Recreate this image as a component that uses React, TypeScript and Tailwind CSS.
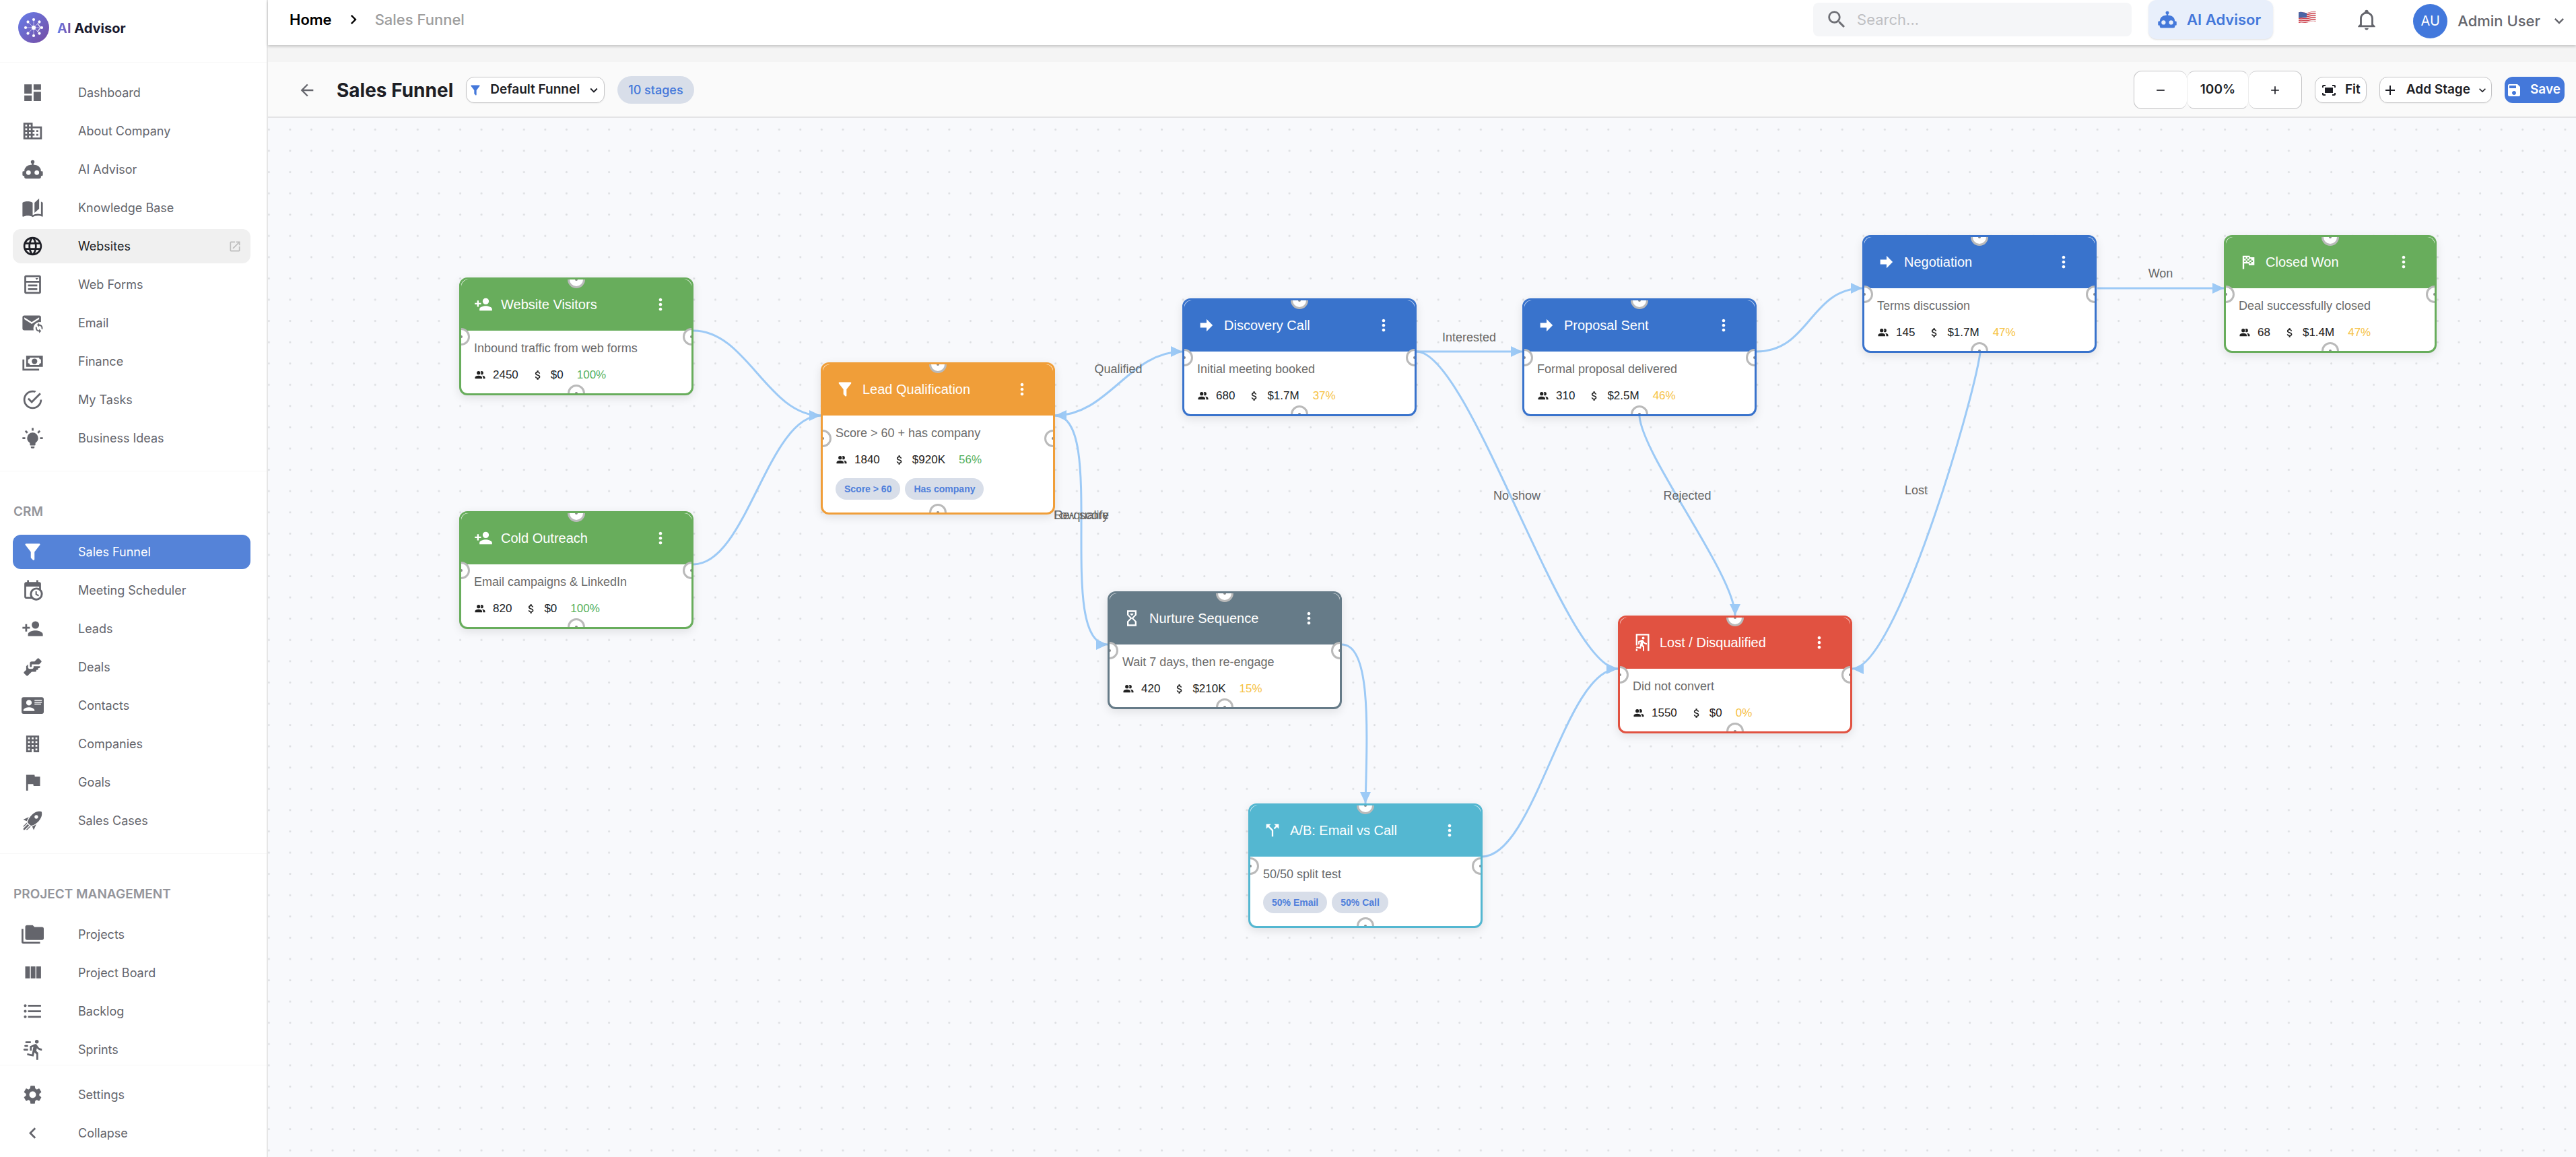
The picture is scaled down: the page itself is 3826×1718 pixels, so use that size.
import {MdArrowBack, MdAttachMoney, MdCallSplit, MdFormatListBulleted, MdLanguage, MdMoreVert, MdOpenInNew, MdSave, MdSearch, MdSettings} from 'react-icons/md'
import type {ComponentType} from 'react'

type IconType = ComponentType<{className?: string}>

const glyph = (d: string): IconType =>
  function Glyph({className}) {
    return (
      <svg viewBox="0 0 24 24" fill="currentColor" className={className} aria-hidden="true">
        <path d={d} />
      </svg>
    )
  }

const Dashboard = glyph('M13 3V9H21V3M13 21H21V11H13M3 21H11V15H3M3 13H11V3H3V13Z')
const Domain = glyph(
  'M18 15H16V17H18M18 11H16V13H18M20 19H12V17H14V15H12V13H14V11H12V9H20M10 7H8V5H10M10 11H8V9H10M10 15H8V13H10M10 19H8V17H10M6 7H4V5H6M6 11H4V9H6M6 15H4V13H6M6 19H4V17H6M12 7V3H2V21H22V7H12Z'
)
const Robot = glyph(
  'M12,2A2,2 0 0,1 14,4C14,4.74 13.6,5.39 13,5.73V7H14A7,7 0 0,1 21,14H22A1,1 0 0,1 23,15V18A1,1 0 0,1 22,19H21V20A2,2 0 0,1 19,22H5A2,2 0 0,1 3,20V19H2A1,1 0 0,1 1,18V15A1,1 0 0,1 2,14H3A7,7 0 0,1 10,7H11V5.73C10.4,5.39 10,4.74 10,4A2,2 0 0,1 12,2M7.5,13A2.5,2.5 0 0,0 5,15.5A2.5,2.5 0 0,0 7.5,18A2.5,2.5 0 0,0 10,15.5A2.5,2.5 0 0,0 7.5,13M16.5,13A2.5,2.5 0 0,0 14,15.5A2.5,2.5 0 0,0 16.5,18A2.5,2.5 0 0,0 19,15.5A2.5,2.5 0 0,0 16.5,13Z'
)
const Book = glyph(
  'M19 2L14 6.5V17.5L19 13V2M6.5 5C4.55 5 2.45 5.4 1 6.5V21.16C1 21.41 1.25 21.66 1.5 21.66C1.6 21.66 1.65 21.59 1.75 21.59C3.1 20.94 5.05 20.5 6.5 20.5C8.45 20.5 10.55 20.9 12 22C13.35 21.15 15.8 20.5 17.5 20.5C19.15 20.5 20.85 20.81 22.25 21.56C22.35 21.61 22.4 21.59 22.5 21.59C22.75 21.59 23 21.34 23 21.09V6.5C22.4 6.05 21.75 5.75 21 5.5V19C19.9 18.65 18.7 18.5 17.5 18.5C15.8 18.5 13.35 19.15 12 20V6.5C10.55 5.4 8.45 5 6.5 5Z'
)
const Form = glyph(
  'M5,2H19A2,2 0 0,1 21,4V20A2,2 0 0,1 19,22H5A2,2 0 0,1 3,20V4A2,2 0 0,1 5,2M5,4V8H19V4H5M5,10V20H19V10H5M15,5H18L16.5,7L15,5M7,12H17V14H7V12M7,16H17V18H7V16Z'
)
const EmailSync = glyph(
  'M3,4H19A2,2 0 0,1 21,6V11.1A7,7 0 0,0 13.1,20H3A2,2 0 0,1 1,18V6A2,2 0 0,1 3,4M11,13L19,8V6L11,11L3,6V8L11,13M19,12V13.5A4,4 0 0,1 22.5,19.2L21.4,18.1A2.5,2.5 0 0,0 19,15V16.5L16.7,14.2L19,12M19,23V21.5A4,4 0 0,1 15.5,15.8L16.6,16.9A2.5,2.5 0 0,0 19,20V18.5L21.3,20.8L19,23Z'
)
const Cash = glyph(
  'M5,6H23V18H5V6M14,9A3,3 0 0,1 17,12A3,3 0 0,1 14,15A3,3 0 0,1 11,12A3,3 0 0,1 14,9M9,8A2,2 0 0,1 7,10V14A2,2 0 0,1 9,16H19A2,2 0 0,1 21,14V10A2,2 0 0,1 19,8H9M1,10H3V20H19V22H1V10Z'
)
const CheckCircle = glyph(
  'M20,12A8,8 0 0,1 12,20A8,8 0 0,1 4,12A8,8 0 0,1 12,4C12.76,4 13.5,4.11 14.2,4.31L15.77,2.74C14.61,2.26 13.34,2 12,2A10,10 0 0,0 2,12A10,10 0 0,0 12,22A10,10 0 0,0 22,12M7.91,10.08L6.5,11.5L11,16L21,6L19.59,4.58L11,13.17L7.91,10.08Z'
)
const Bulb = glyph(
  'M12,6A6,6 0 0,1 18,12C18,14.22 16.79,16.16 15,17.2V19A1,1 0 0,1 14,20H10A1,1 0 0,1 9,19V17.2C7.21,16.16 6,14.22 6,12A6,6 0 0,1 12,6M14,21V22A1,1 0 0,1 13,23H11A1,1 0 0,1 10,22V21H14M20,11H23V13H20V11M1,11H4V13H1V11M13,1V4H11V1H13M4.92,3.5L7.05,5.64L5.63,7.05L3.5,4.93L4.92,3.5M16.95,5.63L19.07,3.5L20.5,4.93L18.37,7.05L16.95,5.63Z'
)
const Filter = glyph(
  'M14,12V19.88C14.04,20.18 13.94,20.5 13.71,20.71C13.32,21.1 12.69,21.1 12.3,20.71L10.29,18.7C10.06,18.47 9.96,18.16 10,17.87V12H9.97L4.21,4.62C3.87,4.19 3.95,3.56 4.38,3.22C4.57,3.08 4.78,3 5,3V3H19V3C19.22,3 19.43,3.08 19.62,3.22C20.05,3.56 20.13,4.19 19.79,4.62L14.03,12H14Z'
)
const CalendarClock = glyph(
  'M15,13H16.5V15.82L18.94,17.23L18.19,18.53L15,16.69V13M19,8H5V19H9.67C9.24,18.09 9,17.07 9,16A7,7 0 0,1 16,9C17.07,9 18.09,9.24 19,9.67V8M5,21C3.89,21 3,20.1 3,19V5C3,3.89 3.89,3 5,3H6V1H8V3H16V1H18V3H19A2,2 0 0,1 21,5V11.1C22.24,12.36 23,14.09 23,16A7,7 0 0,1 16,23C14.09,23 12.36,22.24 11.1,21H5M16,11.15A4.85,4.85 0 0,0 11.15,16C11.15,18.68 13.32,20.85 16,20.85A4.85,4.85 0 0,0 20.85,16C20.85,13.32 18.68,11.15 16,11.15Z'
)
const AccountPlus = glyph(
  'M15,14C12.33,14 7,15.33 7,18V20H23V18C23,15.33 17.67,14 15,14M6,10V7H4V10H1V12H4V15H6V12H9V10M15,12A4,4 0 0,0 19,8A4,4 0 0,0 15,4A4,4 0 0,0 11,8A4,4 0 0,0 15,12Z'
)
const Handshake = glyph(
  'M11 6H14L17.29 2.7A1 1 0 0 1 18.71 2.7L21.29 5.29A1 1 0 0 1 21.29 6.7L19 9H11V11A1 1 0 0 1 10 12A1 1 0 0 1 9 11V8A2 2 0 0 1 11 6M5 11V15L2.71 17.29A1 1 0 0 0 2.71 18.7L5.29 21.29A1 1 0 0 0 6.71 21.29L11 17H15A1 1 0 0 0 16 16V15H17A1 1 0 0 0 18 14V13H19A1 1 0 0 0 20 12V11H13V12A2 2 0 0 1 11 14H9A2 2 0 0 1 7 12V9Z'
)
const ContactCard = glyph(
  'M2,3H22C23.05,3 24,3.95 24,5V19C24,20.05 23.05,21 22,21H2C0.95,21 0,20.05 0,19V5C0,3.95 0.95,3 2,3M14,6V7H22V6H14M14,8V9H21.5L22,9V8H14M14,10V11H21V10H14M8,13.91C6,13.91 2,15 2,17V18H14V17C14,15 10,13.91 8,13.91M8,6A3,3 0 0,0 5,9A3,3 0 0,0 8,12A3,3 0 0,0 11,9A3,3 0 0,0 8,6Z'
)
const Office = glyph(
  'M5,3V21H11V17.5H13V21H19V3H5M7,5H9V7H7V5M11,5H13V7H11V5M15,5H17V7H15V5M7,9H9V11H7V9M11,9H13V11H11V9M15,9H17V11H15V9M7,13H9V15H7V13M11,13H13V15H11V13M15,13H17V15H15V13M7,17H9V19H7V17M15,17H17V19H15V17Z'
)
const Flag = glyph('M14.4,6L14,4H5V21H7V14H12.6L13,16H20V6H14.4Z')
const Rocket = glyph(
  'M13.13 22.19L11.5 18.36C13.07 17.78 14.54 17 15.9 16.09L13.13 22.19M5.64 12.5L1.81 10.87L7.91 8.1C7 9.46 6.22 10.93 5.64 12.5M21.61 2.39C21.61 2.39 16.66 .269 11 5.93C8.81 8.12 7.5 10.53 6.65 12.64C6.37 13.39 6.56 14.21 7.11 14.77L9.24 16.89C9.79 17.45 10.61 17.63 11.36 17.35C13.5 16.53 15.88 15.19 18.07 13C23.73 7.34 21.61 2.39 21.61 2.39M14.54 9.46C13.76 8.68 13.76 7.41 14.54 6.63S16.59 5.85 17.37 6.63C18.14 7.41 18.15 8.68 17.37 9.46C16.59 10.24 15.32 10.24 14.54 9.46M6.24 22L9.88 18.36C9.54 18.27 9.21 18.12 8.91 17.91L4.83 22H6.24M2 22H3.41L8.18 17.24L6.76 15.83L2 20.59V22M2 19.17L6.09 15.09C5.88 14.79 5.73 14.47 5.64 14.12L2 17.76V19.17Z'
)
const Folders = glyph(
  'M22,4H14L12,2H6A2,2 0 0,0 4,4V16A2,2 0 0,0 6,18H22A2,2 0 0,0 24,16V6A2,2 0 0,0 22,4M2,6H0V11H0V20A2,2 0 0,0 2,22H20V20H2V6Z'
)
const Columns = glyph('M16,5V18H21V5M4,18H9V5H4M10,18H15V5H10V18Z')
const Run = glyph(
  'M16.5,5.5A2,2 0 0,0 18.5,3.5A2,2 0 0,0 16.5,1.5A2,2 0 0,0 14.5,3.5A2,2 0 0,0 16.5,5.5M12.9,19.4L13.9,15L16,17V23H18V15.5L15.9,13.5L16.5,10.5C17.89,12.09 19.89,13 22,13V11C20.24,11.03 18.6,10.11 17.7,8.6L16.7,7C16.34,6.4 15.7,6 15,6C14.7,6 14.5,6.1 14.2,6.1L9,8.3V13H11V9.6L12.8,8.9L11.2,17L6.3,16L5.9,18L12.9,19.4M4,9A1,1 0 0,1 3,8A1,1 0 0,1 4,7H7V9H4M5,5A1,1 0 0,1 4,4A1,1 0 0,1 5,3H10V5H5M3,13A1,1 0 0,1 2,12A1,1 0 0,1 3,11H7V13H3Z'
)
const Bell = glyph(
  'M10 21H14C14 22.1 13.1 23 12 23S10 22.1 10 21M21 19V20H3V19L5 17V11C5 7.9 7 5.2 10 4.3V4C10 2.9 10.9 2 12 2S14 2.9 14 4V4.3C17 5.2 19 7.9 19 11V17L21 19M17 11C17 8.2 14.8 6 12 6S7 8.2 7 11V18H17V11Z'
)
const ChevronLeft = glyph('M15.41,16.58L10.83,12L15.41,7.41L14,6L8,12L14,18L15.41,16.58Z')
const ChevronRight = glyph('M8.59,16.58L13.17,12L8.59,7.41L10,6L16,12L10,18L8.59,16.58Z')
const ChevronDown = glyph('M7.41,8.58L12,13.17L16.59,8.58L18,10L12,16L6,10L7.41,8.58Z')
const Plus = glyph('M19,13H13V19H11V13H5V11H11V5H13V11H19V13Z')
const Minus = glyph('M19,13H5V11H19V13Z')
const FitScreen = glyph(
  'M17 4H20C21.1 4 22 4.9 22 6V8H20V6H17V4M4 8V6H7V4H4C2.9 4 2 4.9 2 6V8H4M20 16V18H17V20H20C21.1 20 22 19.1 22 18V16H20M7 18H4V16H2V18C2 19.1 2.9 20 4 20H7V18M18 8H6V16H18V8Z'
)
const ArrowBold = glyph('M4,15V9H12V4.16L19.84,12L12,19.84V15H4Z')
const FlagCheckered = glyph(
  'M14.4,6H20V16H13L12.6,14H7V21H5V4H14L14.4,6M14,14H16V12H18V10H16V8H14V10L13,8V6H11V8H9V6H7V8H9V10H7V12H9V10H11V12H13V10L14,12V14M11,10V8H13V10H11M14,10H16V12H14V10Z'
)
const ExitRun = glyph(
  'M13.34,8.17C12.41,8.17 11.65,7.4 11.65,6.47A1.69,1.69 0 0,1 13.34,4.78C14.28,4.78 15.04,5.54 15.04,6.47C15.04,7.4 14.28,8.17 13.34,8.17M10.3,19.93L4.37,18.75L4.71,17.05L8.86,17.9L10.21,11.04L8.69,11.64V14.5H7V10.54L11.4,8.67L12.07,8.59C12.67,8.59 13.17,8.93 13.5,9.44L14.36,10.79C15.04,12 16.39,12.82 18,12.82V14.5C16.14,14.5 14.44,13.67 13.34,12.4L12.84,14.94L14.61,16.63V23H12.92V17.9L11.14,16.21L10.3,19.93M21,23H19V3H6V16.11L4,15.69V1H21V23M6,23H4V19.78L6,20.2V23Z'
)
const Hourglass = glyph(
  'M6 2V8L10 12L6 16V22H18V16L14 12L18 8V2H6M16 16.5V20H8V16.5L12 12.5L16 16.5M12 11.5L8 7.5V4H16V7.5L12 11.5M10 6V6.75L12 8.75L14 6.75V6H10Z'
)
const People = glyph(
  'M16 17V19H2V17S2 13 9 13 16 17 16 17M12.5 7.5A3.5 3.5 0 1 0 9 11A3.5 3.5 0 0 0 12.5 7.5M15.94 13A5.32 5.32 0 0 1 18 17V19H22V17S22 13.37 15.94 13M15 4A3.39 3.39 0 0 0 13.07 4.59A5 5 0 0 1 13.07 10.41A3.39 3.39 0 0 0 15 11A3.5 3.5 0 0 0 15 4Z'
)

interface NavItem {
  label: string
  icon: IconType
  state?: 'active' | 'hover'
}

const mainItems: NavItem[] = [
  {label: 'Dashboard', icon: Dashboard},
  {label: 'About Company', icon: Domain},
  {label: 'AI Advisor', icon: Robot},
  {label: 'Knowledge Base', icon: Book},
  {label: 'Websites', icon: MdLanguage, state: 'hover'},
  {label: 'Web Forms', icon: Form},
  {label: 'Email', icon: EmailSync},
  {label: 'Finance', icon: Cash},
  {label: 'My Tasks', icon: CheckCircle},
  {label: 'Business Ideas', icon: Bulb}
]

const crmItems: NavItem[] = [
  {label: 'Sales Funnel', icon: Filter, state: 'active'},
  {label: 'Meeting Scheduler', icon: CalendarClock},
  {label: 'Leads', icon: AccountPlus},
  {label: 'Deals', icon: Handshake},
  {label: 'Contacts', icon: ContactCard},
  {label: 'Companies', icon: Office},
  {label: 'Goals', icon: Flag},
  {label: 'Sales Cases', icon: Rocket}
]

const projectItems: NavItem[] = [
  {label: 'Projects', icon: Folders},
  {label: 'Project Board', icon: Columns},
  {label: 'Backlog', icon: MdFormatListBulleted},
  {label: 'Sprints', icon: Run}
]

const rowStates = {
  idle: 'text-[#64656c]',
  hover: 'bg-[#f0f0f0] text-[#1d1e25]',
  active: 'bg-[#5583d8] text-white'
}

function NavRow({label, icon: Icon, state}: NavItem) {
  return (
    <li>
      <a href="#" className={`flex h-[51px] items-center rounded-xl px-[13px] ${rowStates[state ?? 'idle']}`}>
        <Icon className="size-[33px] shrink-0" />
        <span className="ml-[51px] text-[18px]">{label}</span>
        {state === 'hover' && <MdOpenInNew className="ml-auto size-5 text-[#bdbdbd]" />}
      </a>
    </li>
  )
}

function NavList({items}: {items: NavItem[]}) {
  return (
    <ul className="flex flex-col gap-1.5 pr-6 pl-[19px]">
      {items.map(item => (
        <NavRow key={item.label} {...item} />
      ))}
    </ul>
  )
}

function Logo() {
  const spokes = [0, 45, 90, 135, 180, 225, 270, 315]
  return (
    <svg viewBox="0 0 46 46" className="size-[46px]" aria-hidden="true">
      <defs>
        <linearGradient id="logoFill" x1="0" y1="0" x2="1" y2="1">
          <stop offset="0" stopColor="#667eea" />
          <stop offset="1" stopColor="#764ba2" />
        </linearGradient>
      </defs>
      <circle cx="23" cy="23" r="23" fill="url(#logoFill)" />
      {spokes.map(deg => (
        <g key={deg} transform={`rotate(${deg} 23 23)`}>
          <path d="M23 23V11" stroke="#fff" strokeOpacity="0.6" strokeWidth="0.9" />
          <circle cx="23" cy="11" r="2.1" fill="#fff" />
        </g>
      ))}
      <circle cx="23" cy="23" r="3.1" fill="#fff" />
      <path d="M28.5 17L33.5 23L28.5 29" fill="none" stroke="#fff" strokeOpacity="0.8" strokeWidth="1.4" />
    </svg>
  )
}

function Sidebar() {
  return (
    <aside className="flex w-[398px] shrink-0 flex-col overflow-hidden border-r-2 border-[#e6e6e6] bg-white">
      <div className="flex h-[93px] shrink-0 items-start gap-3 border-b border-[#f8f8f8] pt-[18px] pl-[27px]">
        <Logo />
        <span className="text-[20px] leading-[48px] font-bold text-[#1a1a2e]">
          <span className="bg-linear-to-r from-[#667eea] to-[#764ba2] bg-clip-text text-transparent">AI</span> Advisor
        </span>
      </div>
      <nav className="min-h-0 flex-1 overflow-hidden">
        <div className="border-b border-[#f8f8f8] pt-[19px] pb-[23px]">
          <NavList items={mainItems} />
        </div>
        <div className="border-b border-[#f8f8f8] pt-[46px] pb-[23px]">
          <h2 className="mb-5 px-5 text-[19px] leading-[28px] font-semibold text-[#94959b]">CRM</h2>
          <NavList items={crmItems} />
        </div>
        <div className="pt-[46px]">
          <h2 className="mb-5 px-5 text-[19px] leading-[28px] font-semibold text-[#94959b]">PROJECT MANAGEMENT</h2>
          <NavList items={projectItems} />
        </div>
      </nav>
      <div className="shrink-0 border-t border-[#f8f8f8] pt-[18px] pb-2.5">
        <NavList
          items={[
            {label: 'Settings', icon: MdSettings},
            {label: 'Collapse', icon: ChevronLeft}
          ]}
        />
      </div>
    </aside>
  )
}

function UsFlag() {
  return (
    <svg viewBox="0 0 26 19" className="h-[19px] w-[26px]" aria-hidden="true">
      <clipPath id="flagWave">
        <path d="M0 2.500C5 0.500 8 4 13 3S21 0 25.500 1V16C21 14 18 16 13 17.500S5 16 0 18.500Z" />
      </clipPath>
      <g clipPath="url(#flagWave)">
        <rect width="26" height="19" fill="#f3eaea" />
        {[1, 4, 7, 10, 13, 16].map(y => (
          <path key={y} d={`M0 ${y + 1.5}C5 ${y - 0.5} 8 ${y + 2.5} 13 ${y + 1.5}S21 ${y - 1} 26 ${y}`} fill="none" stroke="#cf4450" strokeWidth="1.6" />
        ))}
        <path d="M0 0H12V10C8 11 4 9 0 11Z" fill="#4a64a5" />
      </g>
    </svg>
  )
}

function TopBar() {
  return (
    <header className="z-10 flex h-[67px] shrink-0 items-start bg-white pr-[11px] pl-8 shadow-[0_2px_4px_rgba(0,0,0,0.2)]">
      <nav aria-label="Breadcrumb" className="flex h-[58px] items-center text-[22px]">
        <a href="#" className="font-semibold text-black">
          Home
        </a>
        <ChevronRight className="mx-[18px] size-7" />
        <span className="font-medium text-[#9e9e9e]">Sales Funnel</span>
      </nav>
      <div className="ml-auto flex h-[58px] items-center">
        <label className="mr-[25px] flex h-[50px] w-[473px] items-center rounded-lg bg-[#f5f6f8] pl-[18px] text-[#6e6f75]">
          <MdSearch className="size-[34px]" />
          <input
            type="search"
            aria-label="Search"
            placeholder="Search..."
            className="ml-[13px] min-w-0 flex-1 bg-transparent text-[22px] outline-none placeholder:text-[#bfc0c3]"
          />
        </label>
        <button className="flex h-[58px] items-center gap-[14px] rounded-xl bg-[#e8effb] pr-[18px] pl-[13px] text-[22px] font-semibold text-[#4478da] shadow-sm">
          <Robot className="size-[30px]" />
          AI Advisor
        </button>
        <button aria-label="Language" className="mr-[58px] mb-2 ml-[38px]">
          <UsFlag />
        </button>
        <button aria-label="Notifications" className="mr-[52px]">
          <Bell className="size-[34px] text-[#64656c]" />
        </button>
        <button className="flex items-center pt-1 text-[22px] font-medium text-[#64656c]">
          <span className="mr-[15px] flex size-[51px] items-center justify-center rounded-full bg-[#4278dc] text-[20px] font-normal text-white">AU</span>
          Admin User
          <ChevronDown className="ml-[14px] size-7" />
        </button>
      </div>
    </header>
  )
}

function ToolBar() {
  return (
    <div className="mt-[25px] flex h-[83px] shrink-0 items-center border-b-2 border-[#e4e4e6] bg-[#fafafa] pt-0.5 pr-[17px] pl-11 text-[19px] font-semibold text-[#1d1e25]">
      <button aria-label="Back" className="text-[#64656c]">
        <MdArrowBack className="size-7" />
      </button>
      <h1 className="ml-[30px] text-[28px] font-bold">Sales Funnel</h1>
      <button className="ml-[19px] flex h-[39px] items-center rounded-xl border border-[#c4c4c6] bg-white pr-1 pl-[3px] shadow-xs">
        <Filter className="size-5 text-[#4478da]" />
        <span className="mr-2.5 ml-3">Default Funnel</span>
        <ChevronDown className="size-[22px]" />
      </button>
      <span className="ml-[19px] rounded-full bg-[#d8dee9] px-4 py-2 text-[18px] leading-[25px] font-medium text-[#4478da]">10 stages</span>
      <div className="ml-auto flex h-[57px]">
        <button aria-label="Zoom out" className="flex w-[79px] items-center justify-center rounded-xl border border-r-0 border-[#c4c4c6] bg-white">
          <Minus className="size-5" />
        </button>
        <button className="flex w-[92px] items-center justify-center rounded-xl border border-[#c4c4c6] border-x-[#ececec] bg-white">100%</button>
        <button aria-label="Zoom in" className="flex w-[79px] items-center justify-center rounded-xl border border-l-0 border-[#c4c4c6] bg-white">
          <Plus className="size-5" />
        </button>
      </div>
      <button className="ml-[19px] flex h-[39px] items-center gap-3 rounded-xl border border-[#c4c4c6] bg-white px-2 shadow-xs">
        <FitScreen className="size-6" />
        Fit
      </button>
      <button className="ml-[19px] flex h-[39px] items-center rounded-xl border border-[#c4c4c6] bg-white px-[3px] shadow-xs">
        <Plus className="size-6" />
        <span className="mr-2 ml-3">Add Stage</span>
        <ChevronDown className="size-5" />
      </button>
      <button className="ml-[19px] flex h-[39px] items-center gap-3 rounded-xl bg-[#4478da] pr-1.5 pl-0.5 text-white">
        <MdSave className="size-6" />
        Save
      </button>
    </div>
  )
}

interface Tone {
  border: string
  head: string
}

interface Stage {
  x: number
  y: number
  width?: number
  title: string
  note: string
  tone: Tone
  icon: IconType
  leads?: number
  value?: string
  rate?: string
  good?: boolean
  chips?: string[]
}

const green: Tone = {border: 'border-[#68ad5c]', head: 'bg-[#68ad5c]'}
const blue: Tone = {border: 'border-[#3973cc]', head: 'bg-[#3973cc]'}
const orange: Tone = {border: 'border-[#f09e39]', head: 'bg-[#f09e39]'}
const slate: Tone = {border: 'border-[#667b88]', head: 'bg-[#667b88]'}
const teal: Tone = {border: 'border-[#54b7d1]', head: 'bg-[#54b7d1]'}
const red: Tone = {border: 'border-[#e15241]', head: 'bg-[#e15241]'}

const stages: Stage[] = [
  {x: 284, y: 237, title: 'Website Visitors', note: 'Inbound traffic from web forms', tone: green, icon: AccountPlus, leads: 2450, value: '$0', rate: '100%', good: true},
  {x: 284, y: 584, title: 'Cold Outreach', note: 'Email campaigns & LinkedIn', tone: green, icon: AccountPlus, leads: 820, value: '$0', rate: '100%', good: true},
  {x: 821, y: 363, title: 'Lead Qualification', note: 'Score > 60 + has company', tone: orange, icon: Filter, leads: 1840, value: '$920K', rate: '56%', good: true, chips: ['Score > 60', 'Has company']},
  {x: 1358, y: 268, title: 'Discovery Call', note: 'Initial meeting booked', tone: blue, icon: ArrowBold, leads: 680, value: '$1.7M', rate: '37%'},
  {x: 1863, y: 268, title: 'Proposal Sent', note: 'Formal proposal delivered', tone: blue, icon: ArrowBold, leads: 310, value: '$2.5M', rate: '46%'},
  {x: 2368, y: 174, title: 'Negotiation', note: 'Terms discussion', tone: blue, icon: ArrowBold, leads: 145, value: '$1.7M', rate: '47%'},
  {x: 2905, y: 174, width: 316, title: 'Closed Won', note: 'Deal successfully closed', tone: green, icon: FlagCheckered, leads: 68, value: '$1.4M', rate: '47%'},
  {x: 1247, y: 703, title: 'Nurture Sequence', note: 'Wait 7 days, then re-engage', tone: slate, icon: Hourglass, leads: 420, value: '$210K', rate: '15%'},
  {x: 1456, y: 1018, title: 'A/B: Email vs Call', note: '50/50 split test', tone: teal, icon: MdCallSplit, chips: ['50% Email', '50% Call']},
  {x: 2005, y: 739, title: 'Lost / Disqualified', note: 'Did not convert', tone: red, icon: ExitRun, leads: 1550, value: '$0', rate: '0%'}
]

const ports = [
  '-top-[13px] left-1/2 -translate-x-1/2',
  '-bottom-[13px] left-1/2 -translate-x-1/2',
  '-left-[13px] top-1/2 -translate-y-1/2',
  '-right-[13px] top-1/2 -translate-y-1/2'
]

function StageNode({stage}: {stage: Stage}) {
  const Icon = stage.icon
  return (
    <article
      className={`absolute overflow-hidden rounded-xl border-[3px] bg-white shadow-[0_4px_14px_rgba(0,0,0,0.1)] ${stage.tone.border}`}
      style={{left: stage.x, top: stage.y, width: stage.width ?? 348}}>
      <div className={`flex h-[76px] items-center rounded-t-[11px] pr-8 pb-0.5 pl-[19px] text-white ${stage.tone.head}`}>
        <Icon className="size-7 shrink-0" />
        <h3 className="ml-3 text-[20px]">{stage.title}</h3>
        <button aria-label={`${stage.title} menu`} className="ml-auto">
          <MdMoreVert className="size-7" />
        </button>
      </div>
      <div className="flex flex-col gap-[14px] px-[19px] py-[14px]">
        <p className="text-[18px] leading-6 text-[#6b6b6b]">{stage.note}</p>
        {stage.leads && (
          <div className="flex items-center gap-5 text-[17px] leading-[27px] text-[#212121]">
            <span className="flex items-center gap-2.5">
              <People className="size-[18px]" />
              {stage.leads}
            </span>
            <span className="flex items-center gap-2.5">
              <MdAttachMoney className="size-[18px]" />
              {stage.value}
            </span>
            <span className={stage.good ? 'text-[#56b05a]' : 'text-[#f6c244]'}>{stage.rate}</span>
          </div>
        )}
        {stage.chips && (
          <div className="mb-[5px] flex gap-[7px]">
            {stage.chips.map(chip => (
              <span key={chip} className="rounded-full bg-[#d8dee9] px-[13px] text-[14px] leading-8 font-bold text-[#4f7fdb]">
                {chip}
              </span>
            ))}
          </div>
        )}
      </div>
      {ports.map(place => (
        <span key={place} className={`absolute flex size-[26px] items-center justify-center rounded-full border-[3px] border-[#bababa] bg-white ${place}`}>
          <span className="size-1 rounded-full bg-[#8a8a8a]" />
        </span>
      ))}
    </article>
  )
}

const BEND = 79

const curve = (x1: number, y1: number, x2: number, y2: number) => `M${x1} ${y1}C${x1 + BEND} ${y1} ${x2 - BEND} ${y2} ${x2} ${y2}`

const edges = [
  curve(632, 316, 821, 442),
  curve(632, 663, 821, 442),
  curve(1169, 442, 1358, 347),
  curve(1169, 442, 1247, 782),
  curve(1706, 347, 1863, 347),
  curve(1706, 347, 2005, 818),
  curve(2211, 347, 2369, 253),
  curve(2717, 253, 2905, 253),
  curve(1803, 1097, 2005, 818),
  'M1595 782C1638 782 1633 905 1630 1018',
  'M2037 443C2042 503 2179 679 2179 739',
  'M2543 349C2532 425 2417 818 2353 818'
]

// tip position and heading in degrees
const arrows = [
  [821, 442, 0],
  [1169, 442, 180],
  [1358, 347, 0],
  [1863, 347, 0],
  [2368, 253, 0],
  [2905, 253, 0],
  [1247, 782, 0],
  [2005, 818, 0],
  [2353, 818, 180],
  [1630, 1018, 90],
  [2179, 739, 90]
]

const edgeLabels: [number, number, string][] = [
  [1263, 379, 'Qualified'],
  [1208, 596, 'Low score'],
  [1208, 596, 'Re-qualify'],
  [1784, 332, 'Interested'],
  [1855, 567, 'No show'],
  [2108, 567, 'Rejected'],
  [2448, 559, 'Lost'],
  [2811, 237, 'Won']
]

function Canvas() {
  return (
    <section
      aria-label="Funnel canvas"
      className="relative min-h-0 flex-1 overflow-hidden bg-[#f8f9fc] font-['Liberation_Sans',Arial,sans-serif]">
      <svg className="absolute inset-0 size-full">
        <defs>
          <pattern id="dots" x="1.3" y="17.4" width="31.58" height="31.58" patternUnits="userSpaceOnUse" patternTransform="translate(-1.6 -1.6)">
            <circle cx="1.6" cy="1.6" r="1.5" fill="#dcdee1" />
          </pattern>
        </defs>
        <rect width="100%" height="100%" fill="url(#dots)" />
        <g fill="none" stroke="#9dcaf6" strokeWidth="3">
          {edges.map(d => (
            <path key={d} d={d} />
          ))}
        </g>
        {arrows.map(([x, y, deg]) => (
          <path key={`${x}-${y}`} d="M0 0L-17 -8V8Z" fill="#9dcaf6" transform={`translate(${x} ${y}) rotate(${deg})`} />
        ))}
        <g fill="#666" fontSize="18" textAnchor="middle">
          {edgeLabels.map(([x, y, text]) => (
            <text key={text} x={x} y={y}>
              {text}
            </text>
          ))}
        </g>
      </svg>
      {stages.map(stage => (
        <StageNode key={stage.title} stage={stage} />
      ))}
    </section>
  )
}

export default function App() {
  return (
    <div className="flex h-screen bg-[#f4f4f4] font-['Inter',sans-serif]">
      <Sidebar />
      <main className="flex min-w-0 flex-1 flex-col">
        <TopBar />
        <ToolBar />
        <Canvas />
      </main>
    </div>
  )
}
